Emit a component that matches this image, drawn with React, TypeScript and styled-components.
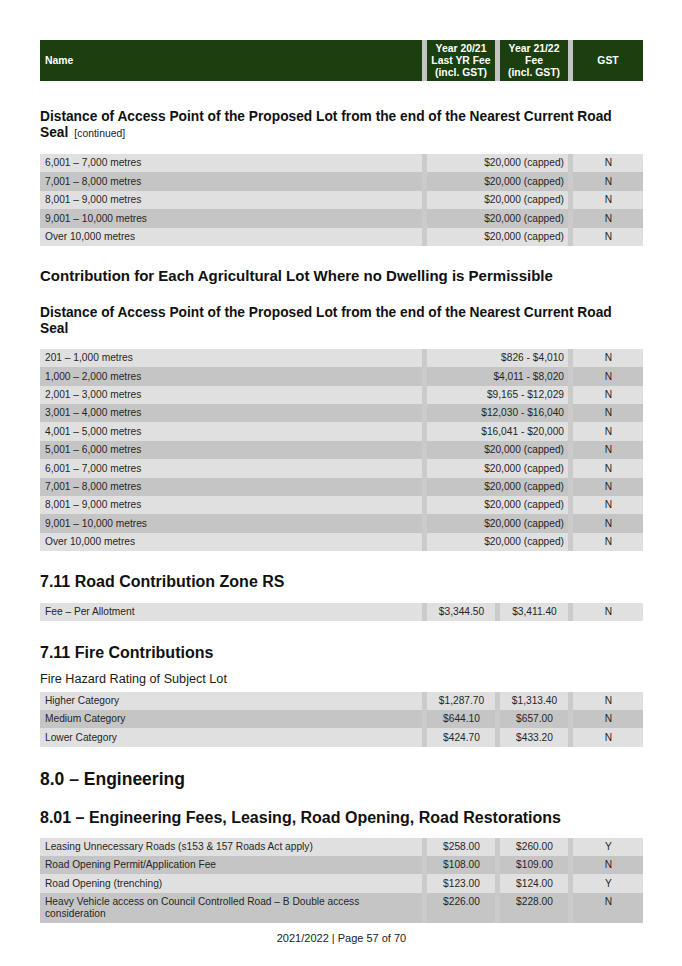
import React from "react";
import styled, { createGlobalStyle } from "styled-components";

const GlobalStyle = createGlobalStyle`
  html, body {
    margin: 0;
    padding: 0;
    background: #fff;
  }
  body {
    font-family: "Liberation Sans", Arial, sans-serif;
    color: #161616;
  }
`;

const Page = styled.div`
  width: 682px;
  box-sizing: border-box;
  padding: 40px 39px 20px 40px;
`;

const HeaderRow = styled.div`
  display: grid;
  grid-template-columns: 382px 68px 68px 70px;
  column-gap: 5px;
  background: #c4c4c4;
  height: 41px;
`;

const HeaderCell = styled.div<{ $left?: boolean }>`
  background: #1b3f0f;
  color: #fff;
  font-weight: bold;
  font-size: 10.4px;
  line-height: 12px;
  display: flex;
  flex-direction: column;
  justify-content: center;
  align-items: ${(p) => (p.$left ? "flex-start" : "center")};
  text-align: ${(p) => (p.$left ? "left" : "center")};
  white-space: nowrap;
  padding: ${(p) => (p.$left ? "0 5px" : "0")};
`;

const SubHeading = styled.h4<{ $mt: number }>`
  margin: ${(p) => p.$mt}px 0 0;
  font-size: 13.75px;
  line-height: 16px;
  font-weight: bold;
  color: #111;
  white-space: nowrap;
`;

const Continued = styled.span`
  font-weight: normal;
  font-size: 10.4px;
  margin-left: 6px;
  color: #222;
`;

const GroupTitle = styled.h3<{ $mt: number }>`
  margin: ${(p) => p.$mt}px 0 0;
  font-size: 15px;
  line-height: 18px;
  font-weight: bold;
  color: #111;
`;

const SectionTitle = styled.h2<{ $mt: number }>`
  margin: ${(p) => p.$mt}px 0 0;
  font-size: 16px;
  line-height: 20px;
  font-weight: bold;
  color: #111;
`;

const ChapterTitle = styled.h1<{ $mt: number }>`
  margin: ${(p) => p.$mt}px 0 0;
  font-size: 17.5px;
  line-height: 22px;
  font-weight: bold;
  color: #111;
`;

const Caption = styled.p<{ $mt: number }>`
  margin: ${(p) => p.$mt}px 0 0;
  font-size: 12.65px;
  line-height: 16px;
  color: #1a1a1a;
`;

const Table = styled.div<{ $mt: number }>`
  margin-top: ${(p) => p.$mt}px;
  display: flex;
  flex-direction: column;
`;

const Row = styled.div<{ $split: boolean }>`
  display: grid;
  grid-template-columns: ${(p) => (p.$split ? "382px 68px 68px 70px" : "382px 141px 70px")};
  column-gap: 5px;
  background: #cbcbcb;
`;

const Cell = styled.div<{ $dark: boolean; $align?: "left" | "center" | "right" }>`
  background: ${(p) => (p.$dark ? "#c5c5c5" : "#e0e0e0")};
  font-size: 10.2px;
  line-height: 11.6px;
  padding: 3.4px 4px 3.4px 5px;
  color: #262626;
  text-align: ${(p) => p.$align || "left"};
`;

const Footer = styled.div`
  margin-top: 8px;
  text-align: center;
  font-size: 11px;
  line-height: 14px;
  color: #222;
`;

type FeeRow = { name: string; last?: string; fee: string; gst: string };

const FeeTable: React.FC<{ rows: FeeRow[]; mt: number }> = ({ rows, mt }) => {
  const split = rows.some((r) => r.last !== undefined);
  return (
    <Table $mt={mt}>
      {rows.map((r, i) => {
        const dark = i % 2 === 1;
        return (
          <Row key={i} $split={split}>
            <Cell $dark={dark}>{r.name}</Cell>
            {split && (
              <Cell $dark={dark} $align="center">
                {r.last}
              </Cell>
            )}
            <Cell $dark={dark} $align={split ? "center" : "right"}>
              {r.fee}
            </Cell>
            <Cell $dark={dark} $align="center">
              {r.gst}
            </Cell>
          </Row>
        );
      })}
    </Table>
  );
};

const capped = (name: string): FeeRow => ({ name, fee: "$20,000 (capped)", gst: "N" });

const continuedRows: FeeRow[] = [
  capped("6,001 – 7,000 metres"),
  capped("7,001 – 8,000 metres"),
  capped("8,001 – 9,000 metres"),
  capped("9,001 – 10,000 metres"),
  capped("Over 10,000 metres"),
];

const agriculturalRows: FeeRow[] = [
  { name: "201 – 1,000 metres", fee: "$826 - $4,010", gst: "N" },
  { name: "1,000 – 2,000 metres", fee: "$4,011 - $8,020", gst: "N" },
  { name: "2,001 – 3,000 metres", fee: "$9,165 - $12,029", gst: "N" },
  { name: "3,001 – 4,000 metres", fee: "$12,030 - $16,040", gst: "N" },
  { name: "4,001 – 5,000 metres", fee: "$16,041 - $20,000", gst: "N" },
  capped("5,001 – 6,000 metres"),
  capped("6,001 – 7,000 metres"),
  capped("7,001 – 8,000 metres"),
  capped("8,001 – 9,000 metres"),
  capped("9,001 – 10,000 metres"),
  capped("Over 10,000 metres"),
];

const zoneRows: FeeRow[] = [
  { name: "Fee – Per Allotment", last: "$3,344.50", fee: "$3,411.40", gst: "N" },
];

const fireRows: FeeRow[] = [
  { name: "Higher Category", last: "$1,287.70", fee: "$1,313.40", gst: "N" },
  { name: "Medium Category", last: "$644.10", fee: "$657.00", gst: "N" },
  { name: "Lower Category", last: "$424.70", fee: "$433.20", gst: "N" },
];

const engineeringRows: FeeRow[] = [
  { name: "Leasing Unnecessary Roads (s153 & 157 Roads Act apply)", last: "$258.00", fee: "$260.00", gst: "Y" },
  { name: "Road Opening Permit/Application Fee", last: "$108.00", fee: "$109.00", gst: "N" },
  { name: "Road Opening (trenching)", last: "$123.00", fee: "$124.00", gst: "Y" },
  {
    name: "Heavy Vehicle access on Council Controlled Road – B Double access consideration",
    last: "$226.00",
    fee: "$228.00",
    gst: "N",
  },
];

const App: React.FC = () => {
  return (
    <Page>
      <GlobalStyle />
      <HeaderRow>
        <HeaderCell $left>Name</HeaderCell>
        <HeaderCell>
          <span>Year 20/21</span>
          <span>Last YR Fee</span>
          <span>(incl. GST)</span>
        </HeaderCell>
        <HeaderCell>
          <span>Year 21/22</span>
          <span>Fee</span>
          <span>(incl. GST)</span>
        </HeaderCell>
        <HeaderCell>GST</HeaderCell>
      </HeaderRow>

      <SubHeading $mt={28}>
        Distance of Access Point of the Proposed Lot from the end of the Nearest Current Road
        <br />
        Seal<Continued>[continued]</Continued>
      </SubHeading>
      <FeeTable rows={continuedRows} mt={12} />

      <GroupTitle $mt={21}>Contribution for Each Agricultural Lot Where no Dwelling is Permissible</GroupTitle>
      <SubHeading $mt={20}>
        Distance of Access Point of the Proposed Lot from the end of the Nearest Current Road
        <br />
        Seal
      </SubHeading>
      <FeeTable rows={agriculturalRows} mt={12} />

      <SectionTitle $mt={20.6}>7.11 Road Contribution Zone RS</SectionTitle>
      <FeeTable rows={zoneRows} mt={11} />

      <SectionTitle $mt={21.6}>7.11 Fire Contributions</SectionTitle>
      <Caption $mt={8}>Fire Hazard Rating of Subject Lot</Caption>
      <FeeTable rows={fireRows} mt={5} />

      <ChapterTitle $mt={21}>8.0 – Engineering</ChapterTitle>
      <SectionTitle $mt={18}>8.01 – Engineering Fees, Leasing, Road Opening, Road Restorations</SectionTitle>
      <FeeTable rows={engineeringRows} mt={10} />

      <Footer>2021/2022 | Page 57 of 70</Footer>
    </Page>
  );
};

export default App;
